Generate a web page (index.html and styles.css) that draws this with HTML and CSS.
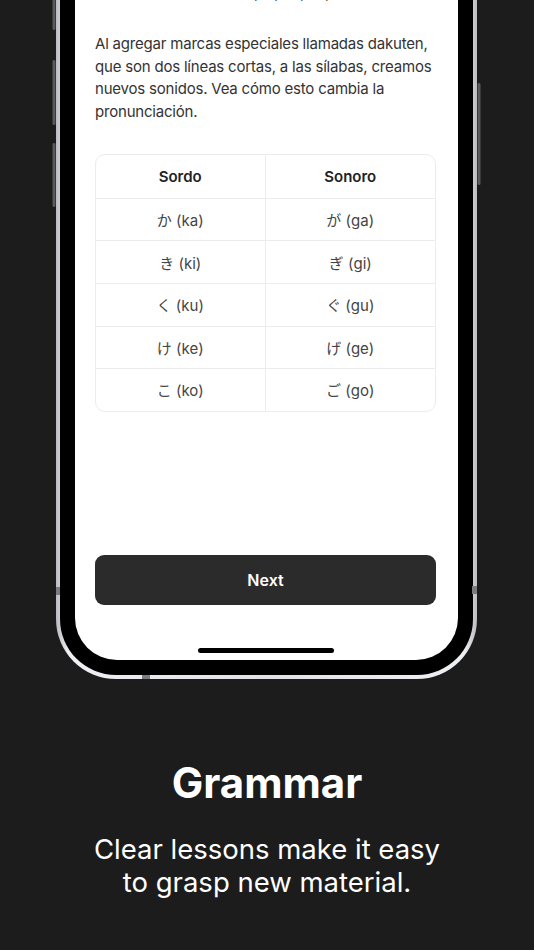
FILE: index.html
```html
<!DOCTYPE html>
<html lang="es">
<head>
<meta charset="utf-8">
<title>Grammar</title>
<link rel="stylesheet" href="styles.css">
</head>
<body>
<div class="page">
  <div class="phone">
    <span class="btn btn-l1"></span>
    <span class="btn btn-l2"></span>
    <span class="btn btn-l3"></span>
    <span class="btn btn-r1"></span>
    <span class="band band-l"></span>
    <span class="band band-r"></span>
    <span class="band band-b"></span>
    <div class="bezel">
      <div class="screen">
        <p class="prev">(ka, ki, ku, ke, ko)</p>
        <p class="intro">Al agregar marcas especiales llamadas dakuten, que son dos líneas cortas, a las sílabas, creamos nuevos sonidos. Vea cómo esto cambia la pronunciación.</p>
        <table class="kana">
          <thead>
            <tr><th>Sordo</th><th>Sonoro</th></tr>
          </thead>
          <tbody>
            <tr><td>か (ka)</td><td>が (ga)</td></tr>
            <tr><td>き (ki)</td><td>ぎ (gi)</td></tr>
            <tr><td>く (ku)</td><td>ぐ (gu)</td></tr>
            <tr><td>け (ke)</td><td>げ (ge)</td></tr>
            <tr><td>こ (ko)</td><td>ご (go)</td></tr>
          </tbody>
        </table>
        <button class="next">Next</button>
        <div class="home"></div>
      </div>
    </div>
  </div>
  <h1 class="title">Grammar</h1>
  <p class="subtitle">Clear lessons make it easy<br>to grasp new material.</p>
</div>
</body>
</html>
```
FILE: styles.css
```css
html, body {
  margin: 0;
  padding: 0;
}
body {
  background: #1c1c1c;
  width: 534px;
  height: 950px;
  overflow: hidden;
  font-family: Inter, "Noto Sans", "Noto Sans CJK JP", sans-serif;
}
.page {
  display: flex;
  flex-direction: column;
}
.phone {
  position: relative;
  margin-top: -121px;
  margin-left: 56px;
  width: 421px;
  height: 800px;
  box-sizing: border-box;
  padding: 4px;
  border-radius: 60px;
  background: linear-gradient(90deg, #b9bbc0 0%, #eef0f3 3%, #dfe1e5 50%, #eef0f3 97%, #b9bbc0 100%);
}
.bezel {
  height: 100%;
  box-sizing: border-box;
  padding: 15px;
  border-radius: 56px;
  background: #000;
}
.screen {
  height: 100%;
  box-sizing: border-box;
  border-radius: 42px;
  background: #fff;
  padding: 84px 22px 7px 20px;
  display: flex;
  flex-direction: column;
  overflow: hidden;
}
.btn {
  position: absolute;
  width: 4px;
  border-radius: 2px;
  background: linear-gradient(90deg, #2a2a2a, #6a6a6a 50%, #2a2a2a);
}
.btn-l1 { left: -4px; top: 100px; height: 51px; }
.btn-l2 { left: -4px; top: 181px; height: 65px; }
.btn-l3 { left: -4px; top: 264px; height: 64px; }
.btn-r1 { right: -4px; top: 204px; height: 102px; }
.band {
  position: absolute;
  background: #7b7b7e;
}
.band-l { left: 0; top: 708px; width: 4px; height: 8px; }
.band-r { right: 0; top: 707px; width: 5px; height: 8px; }
.band-b { left: 86px; bottom: 0; width: 8px; height: 4px; }

.prev {
  margin: 0;
  padding-left: 137px;
  font-size: 15px;
  line-height: 22px;
  color: #333;
}
.intro {
  margin: 29px 0 0;
  font-size: 15px;
  line-height: 22.7px;
  letter-spacing: -0.2px;
  color: #333;
}
.kana {
  margin-top: 30px;
  width: 100%;
  border-collapse: separate;
  border-spacing: 0;
  border: 1px solid #ececec;
  border-radius: 10px;
  table-layout: fixed;
  font-size: 15px;
}
.kana th, .kana td {
  text-align: center;
  padding: 0;
  border-bottom: 1px solid #ececec;
}
.kana th:first-child, .kana td:first-child {
  border-right: 1px solid #ececec;
}
.kana tbody tr:last-child td {
  border-bottom: none;
}
.kana th {
  height: 43px;
  font-weight: 600;
  color: #222;
}
.kana td {
  height: 41.6px;
  color: #444;
}
.next {
  margin-top: auto;
  height: 50px;
  border: none;
  border-radius: 9px;
  background: #2b2b2b;
  color: #fff;
  font-family: inherit;
  font-size: 16px;
  font-weight: 600;
}
.home {
  align-self: center;
  margin-top: 43px;
  width: 136px;
  height: 5px;
  border-radius: 3px;
  background: #000;
}
.title {
  margin: 79px 0 0;
  text-align: center;
  color: #fff;
  font-size: 42px;
  line-height: 50px;
  font-weight: 700;
}
.subtitle {
  margin: 25px 0 0;
  text-align: center;
  color: #fff;
  font-size: 27.5px;
  line-height: 33px;
  font-weight: 400;
}
```
